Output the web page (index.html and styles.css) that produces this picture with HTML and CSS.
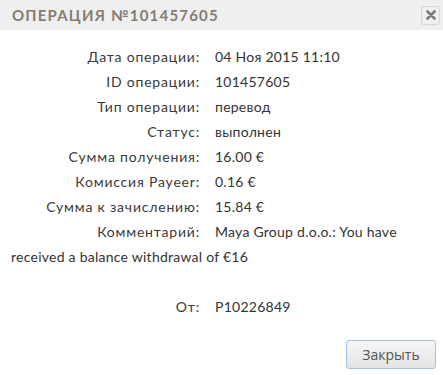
FILE: index.html
```html
<!DOCTYPE html>
<html lang="ru">
<head>
  <meta charset="UTF-8">
  <title>Операция №101457605</title>
  <link rel="stylesheet" href="styles.css">
</head>
<body>
  <div class="dialog">
    <div class="titlebar">
      <span class="title">ОПЕРАЦИЯ №101457605</span>
      <button class="close" title="Закрыть">
        <svg width="10" height="10" viewBox="0 0 10 10"><path d="M1.5 1.5 L8.5 8.5 M8.5 1.5 L1.5 8.5" stroke="#7a7a7a" stroke-width="2.6" stroke-linecap="round"/></svg>
      </button>
    </div>

    <div class="content">
      <div class="info">
        <span class="lbl">Дата операции:</span>04 Ноя 2015 11:10<br>
        <span class="lbl">ID операции:</span>101457605<br>
        <span class="lbl">Тип операции:</span>перевод<br>
        <span class="lbl">Статус:</span>выполнен<br>
        <span class="lbl">Сумма получения:</span>16.00 €<br>
        <span class="lbl">Комиссия Payeer:</span>0.16 €<br>
        <span class="lbl">Сумма к зачислению:</span>15.84 €<br>
        <span class="lbl">Комментарий:</span>Maya Group d.o.o.: You have received a balance withdrawal of €16<br>
        <br>
        <span class="lbl">От:</span>P10226849
      </div>
    </div>

    <div class="buttons">
      <button class="btn">Закрыть</button>
    </div>
  </div>
</body>
</html>
```

FILE: styles.css
```css
body {
  margin: 0;
  background: #fff;
  font-family: Lato, sans-serif;
}
.dialog {
  width: 443px;
  height: 375px;
  display: flex;
  flex-direction: column;
}
.titlebar {
  height: 30px;
  background: #efefef;
  display: flex;
  align-items: center;
  justify-content: space-between;
  padding: 0 3px 0 12px;
  box-sizing: border-box;
}
.title {
  font-size: 15px;
  font-weight: bold;
  letter-spacing: 1.2px;
  color: #857d74;
}
.close {
  width: 19px;
  height: 19px;
  padding: 0;
  border: 1px solid #d6d6d6;
  border-radius: 3px;
  background: #efefef;
  display: flex;
  align-items: center;
  justify-content: center;
}
.content {
  padding: 14px 11px 0;
}
.info {
  font-size: 14px;
  line-height: 25px;
  letter-spacing: 0.25px;
  color: #333;
}
.lbl {
  display: inline-block;
  width: 189px;
  padding-right: 15px;
  text-align: right;
  letter-spacing: 0.8px;
  color: #3a3a3a;
}
.buttons {
  margin-top: auto;
  display: flex;
  justify-content: flex-end;
  padding: 0 7px 6px 0;
}
.btn {
  width: 90px;
  height: 29px;
  font-family: "Open Sans", sans-serif;
  font-size: 14px;
  color: #555;
  border: 1px solid #9ec3ea;
  border-radius: 3px;
  background: linear-gradient(#f6f6f6, #e4e4e4);
}
```
